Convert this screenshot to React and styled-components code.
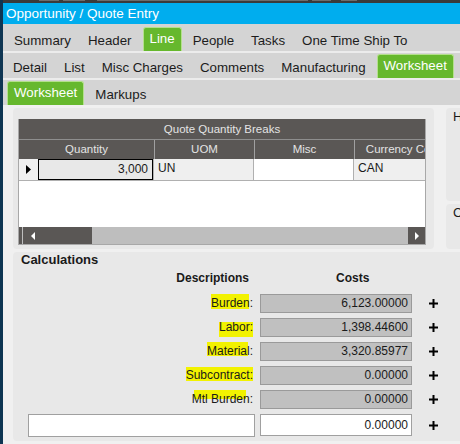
import React from 'react'
import styled, { createGlobalStyle } from 'styled-components'

const GlobalStyle = createGlobalStyle`
    html, body {
        margin: 0;
        padding: 0;
        background: #f0f0f0;
    }
    body {
        width: 460px;
        height: 444px;
        overflow: hidden;
        font-family: "Liberation Sans", Arial, sans-serif;
        color: #1a1a1a;
    }
`;

const Frame = styled.div`
    display: flex;
    height: 444px;
`;

const LeftEdge = styled.div`
    width: 3px;
    background: #0e3552;
    flex-shrink: 0;
`;

const Main = styled.div`
    flex: 1;
    min-width: 0;
    display: flex;
    flex-direction: column;
`;

const TopStrip = styled.div`
    height: 3px;
    background: #3a3a3a;
    display: flex;
    align-items: flex-start;
    padding-left: 36px;
    gap: 4px;
    span {
        height: 1px;
        background: #6c6c6c;
    }
`;

const TitleBar = styled.div`
    height: 21px;
    line-height: 21px;
    background: #00adee;
    color: #fff;
    font-size: 13.5px;
    padding-left: 3px;
`;

const TabRow = styled.div`
    height: ${p => p.h}px;
    background: #d4d4d4;
    display: flex;
    align-items: flex-end;
    gap: 5px;
    padding-left: ${p => p.pl}px;
    border-bottom: ${p => p.last ? 'none' : '2px solid #ececec'};
`;

const Tab = styled.div`
    height: 24px;
    box-sizing: border-box;
    display: flex;
    align-items: center;
    padding: 3px 6px 0;
    font-size: 13.3px;
    white-space: nowrap;
    color: #1c1c1c;
    &.active{
        background: #66b82d;
        color: #fff;
        border: 1px solid #b4e08c;
        border-bottom: none;
        border-radius: 3px 3px 0 0;
        padding: 0 6px 3px;
    }
`;

const Content = styled.div`
    flex: 1;
    padding: 3px 0 0 10px;
    display: flex;
    flex-direction: column;
    gap: 3px;
`;

const TopSection = styled.div`
    display: flex;
    gap: 12px;
    height: 141px;
`;

const GridPanel = styled.div`
    width: 421px;
    flex-shrink: 0;
    box-sizing: border-box;
    background: #e8e8e8;
    border-radius: 4px;
    padding: 11px 8px 5px 5px;
`;

const SidePanels = styled.div`
    flex: 1;
    display: flex;
    flex-direction: column;
    gap: 3px;
`;

const SidePanel = styled.div`
    height: ${p => p.h}px;
    background: #e8e8e8;
    border-radius: 4px 0 0 4px;
    padding: 1px 0 0 7px;
    font-size: 13px;
    line-height: 15px;
    overflow: hidden;
`;

const GridBox = styled.div`
    height: 125px;
    border: 1px solid #a8a8a8;
    border-top: none;
    display: flex;
    flex-direction: column;
    overflow: hidden;
    background: #fff;
`;

const GridTitle = styled.div`
    height: 20px;
    line-height: 20px;
    background: #5a5755;
    color: #e4e4e4;
    font-size: 11.5px;
    text-align: center;
    border-bottom: 1px solid #8e8e8e;
`;

const HeaderRow = styled.div`
    display: grid;
    grid-template-columns: 135px 100px 100px 100px;
    height: 19px;
    background: #5a5755;
    color: #e4e4e4;
    font-size: 11.5px;
`;

const HeaderCell = styled.div`
    line-height: 19px;
    text-align: center;
    white-space: nowrap;
    & + &{
        border-left: 1px solid #a0a0a0;
    }
`;

const DataRow = styled.div`
    display: grid;
    grid-template-columns: 19px 115px 100px 100px 100px;
    height: 21px;
    border-bottom: 1px solid #b0b0b0;
    font-size: 12px;
`;

const Cell = styled.div`
    box-sizing: border-box;
    line-height: 19px;
    background: ${p => p.bg || '#efefef'};
    border-left: 1px solid #b0b0b0;
    padding: 0 4px;
    text-align: ${p => p.right ? 'right' : 'left'};
    white-space: nowrap;
    &.current{
        border: 1px solid #000;
        background: #e8e8e8;
        line-height: 18px;
    }
    &.selector{
        border-left: none;
        display: flex;
        align-items: center;
        padding-left: 7px;
    }
`;

const GridEmpty = styled.div`
    flex: 1;
    background: #fff;
`;

const ScrollBar = styled.div`
    height: 17px;
    display: flex;
    background: #bebebe;
`;

const ScrollPart = styled.div`
    width: ${p => p.w}px;
    background: #5a5755;
    display: flex;
    align-items: center;
    padding-left: ${p => p.pl || 0}px;
    box-sizing: border-box;
    margin-right: ${p => p.mr || 0}px;
    &.end{
        margin-left: auto;
    }
`;

const CalcPanel = styled.div`
    height: 189px;
    background: #e8e8e8;
    border-radius: 4px 0 0 4px;
    padding: 0 0 0 8px;
`;

const CalcTitle = styled.div`
    font-weight: bold;
    font-size: 13px;
    line-height: 16px;
`;

const CalcGrid = styled.div`
    display: grid;
    grid-template-columns: 227px 152px 32px;
    grid-auto-rows: 19px;
    column-gap: 5px;
    row-gap: 5px;
    padding-left: 7px;
    margin-top: 2px;
    font-size: 12px;
`;

const ColHead = styled.div`
    font-weight: bold;
    line-height: 16px;
    height: 16px;
    text-align: ${p => p.align};
    padding-right: ${p => p.pr || 0}px;
    padding-left: ${p => p.pl || 0}px;
`;

const Label = styled.div`
    text-align: right;
    line-height: 19px;
    padding-right: 2px;
`;

const Marked = styled.span`
    display: inline-block;
    background-image: linear-gradient(#f2f200, #f2f200);
    background-repeat: no-repeat;
    background-size: ${p => p.bw}px ${p => p.bh}px;
    background-position: ${p => p.bx}px ${p => p.by}px;
`;

const Amount = styled.div`
    box-sizing: border-box;
    height: ${p => p.tall ? 22 : 19}px;
    line-height: ${p => p.tall ? 20 : 17}px;
    background: ${p => p.white ? '#fff' : '#c0c0c0'};
    border: 1px solid ${p => p.white ? '#a0a0a0' : '#9a9a9a'};
    text-align: right;
    padding-right: 3px;
    color: #1a1a1a;
`;

const TextBox = styled.div`
    box-sizing: border-box;
    height: 23px;
    background: #fff;
    border: 1px solid #a0a0a0;
`;

const Plus = styled.div`
    display: flex;
    align-items: center;
    justify-content: center;
    height: ${p => p.h || 19}px;
`;

const PlusIcon = () => (
    <svg width="9" height="9" viewBox="0 0 9 9">
        <rect x="3.5" y="0" width="2" height="9" fill="#000" />
        <rect x="0" y="3.5" width="9" height="2" fill="#000" />
    </svg>
)

const calcRows = [
    { label: 'Burden:', value: '6,123.00000', mark: { bx: 0, by: 0, bw: 38, bh: 15 } },
    { label: 'Labor:', value: '1,398.44600', mark: { bx: 0, by: 4, bw: 35, bh: 16 } },
    { label: 'Material:', value: '3,320.85977', mark: { bx: 0, by: 0, bw: 41, bh: 14 } },
    { label: 'Subcontract:', value: '0.00000', mark: { bx: 0, by: 1, bw: 67, bh: 14 } },
    { label: 'Mtl Burden:', value: '0.00000', mark: { bx: 2, by: -1, bw: 52, bh: 10 } },
]

function App() {
    return (
        <>
            <GlobalStyle />
            <Frame>
                <LeftEdge />
                <Main>
                    <TopStrip>
                        <span style={{ width: 20 }} />
                        <span style={{ width: 22 }} />
                        <span style={{ width: 211, marginLeft: 8 }} />
                        <span style={{ width: 19 }} />
                        <span style={{ width: 16, marginLeft: 6 }} />
                    </TopStrip>
                    <TitleBar>Opportunity / Quote Entry</TitleBar>

                    <TabRow h={27} pl={5}>
                        <Tab>Summary</Tab>
                        <Tab>Header</Tab>
                        <Tab className="active">Line</Tab>
                        <Tab>People</Tab>
                        <Tab>Tasks</Tab>
                        <Tab>One Time Ship To</Tab>
                    </TabRow>
                    <TabRow h={25} pl={4}>
                        <Tab>Detail</Tab>
                        <Tab>List</Tab>
                        <Tab>Misc Charges</Tab>
                        <Tab>Comments</Tab>
                        <Tab>Manufacturing</Tab>
                        <Tab className="active">Worksheet</Tab>
                    </TabRow>
                    <TabRow h={25} pl={4} last>
                        <Tab className="active">Worksheet</Tab>
                        <Tab>Markups</Tab>
                    </TabRow>

                    <Content>
                        <TopSection>
                            <GridPanel>
                                <GridBox>
                                    <GridTitle>Quote Quantity Breaks</GridTitle>
                                    <HeaderRow>
                                        <HeaderCell>Quantity</HeaderCell>
                                        <HeaderCell>UOM</HeaderCell>
                                        <HeaderCell>Misc</HeaderCell>
                                        <HeaderCell>Currency Code</HeaderCell>
                                    </HeaderRow>
                                    <DataRow>
                                        <Cell className="selector" bg="#f0f0f0">
                                            <svg width="5" height="9" viewBox="0 0 5 9">
                                                <polygon points="0,0 5,4.5 0,9" fill="#000" />
                                            </svg>
                                        </Cell>
                                        <Cell className="current" right>3,000</Cell>
                                        <Cell>UN</Cell>
                                        <Cell bg="#fff"></Cell>
                                        <Cell>CAN</Cell>
                                    </DataRow>
                                    <GridEmpty />
                                    <ScrollBar>
                                        <ScrollPart w={3} mr={1} />
                                        <ScrollPart w={69} pl={8}>
                                            <svg width="4" height="8" viewBox="0 0 4 8">
                                                <polygon points="4,0 0,4 4,8" fill="#fff" />
                                            </svg>
                                        </ScrollPart>
                                        <ScrollPart className="end" w={17} pl={7}>
                                            <svg width="4" height="8" viewBox="0 0 4 8">
                                                <polygon points="0,0 4,4 0,8" fill="#fff" />
                                            </svg>
                                        </ScrollPart>
                                    </ScrollBar>
                                </GridBox>
                            </GridPanel>
                            <SidePanels>
                                <SidePanel h={93}>H</SidePanel>
                                <SidePanel h={45}>C</SidePanel>
                            </SidePanels>
                        </TopSection>

                        <CalcPanel>
                            <CalcTitle>Calculations</CalcTitle>
                            <CalcGrid>
                                <ColHead align="right" pr={6}>Descriptions</ColHead>
                                <ColHead align="left" pl={76}>Costs</ColHead>
                                <div />
                                {calcRows.map(r => (
                                    <React.Fragment key={r.label}>
                                        <Label>
                                            <Marked {...r.mark}>{r.label}</Marked>
                                        </Label>
                                        <Amount>{r.value}</Amount>
                                        <Plus><PlusIcon /></Plus>
                                    </React.Fragment>
                                ))}
                                <TextBox />
                                <Amount white tall>0.00000</Amount>
                                <Plus h={22}><PlusIcon /></Plus>
                            </CalcGrid>
                        </CalcPanel>
                    </Content>
                </Main>
            </Frame>
        </>
    )
}

export default App
